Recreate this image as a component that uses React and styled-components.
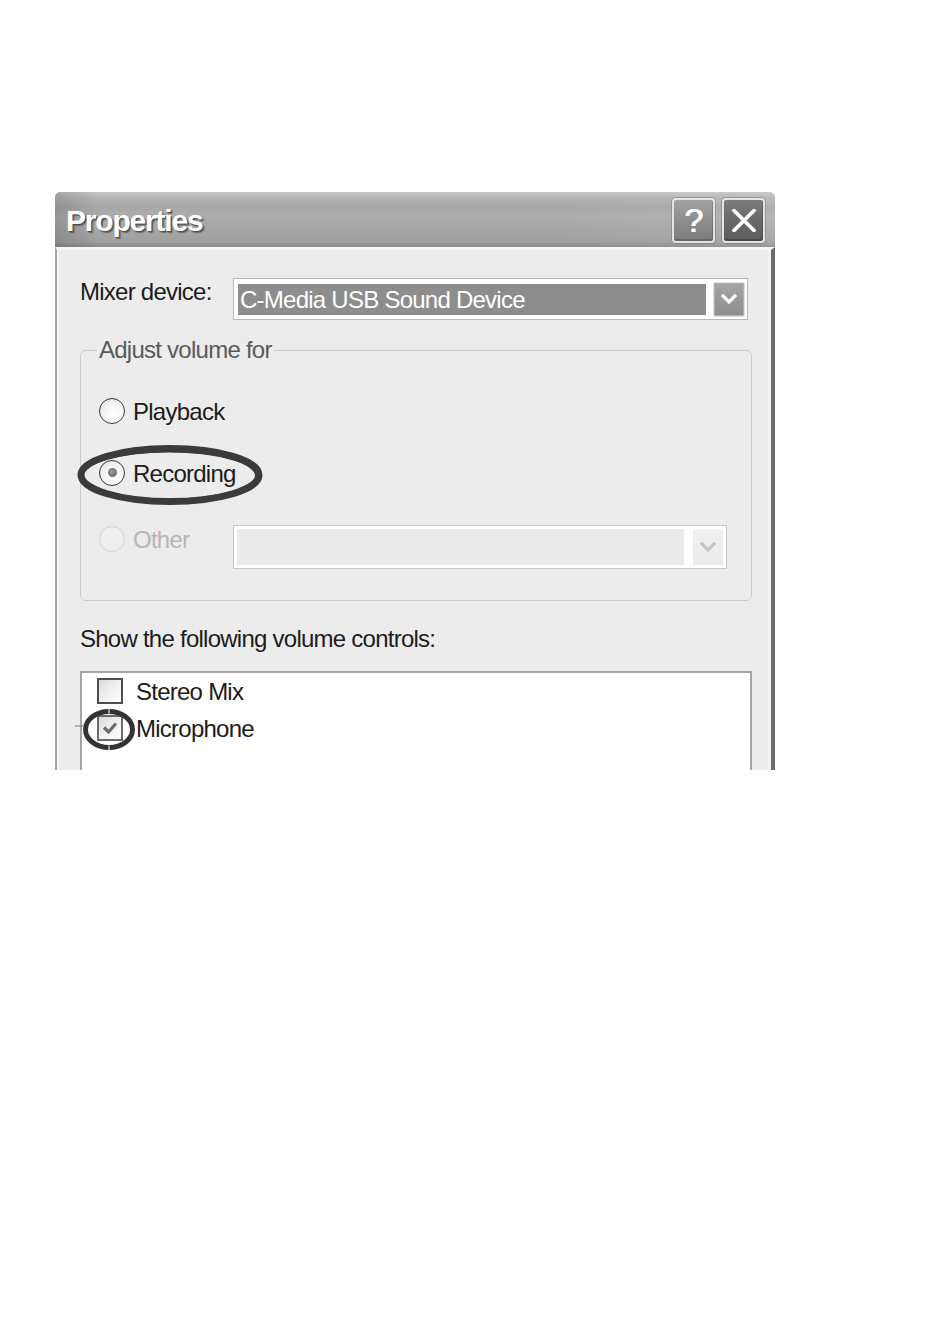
import React from 'react';
import styled, { createGlobalStyle } from 'styled-components';

const GlobalStyle = createGlobalStyle`
  html, body { margin: 0; padding: 0; background: #ffffff; }
  body { font-family: "Liberation Sans", Arial, sans-serif; }
  * { box-sizing: border-box; }
`;

const Page = styled.div`
  width: 950px;
  height: 1331px;
  padding: 192px 0 0 55px;
  background: #fff;
`;

const Dialog = styled.div`
  width: 720px;
  height: 578px;
  overflow: hidden;
  display: flex;
  flex-direction: column;
`;

const TitleBar = styled.div`
  flex: none;
  height: 55px;
  padding: 0 10px 0 11px;
  display: flex;
  align-items: center;
  justify-content: space-between;
  border-radius: 5px 5px 0 0;
  background:
    linear-gradient(to right, rgba(0,0,0,0.14), rgba(0,0,0,0) 6%, rgba(0,0,0,0) 70%, rgba(255,255,255,0.10)),
    linear-gradient(#c6c6c6 0%, #b4b4b4 10%, #a8a8a8 26%, #adadad 48%, #a5a5a5 72%, #9f9f9f 90%, #8a8a8a 100%);
`;

const Title = styled.div`
  font-family: "Liberation Sans", Arial, sans-serif;
  font-weight: 700;
  font-size: 30px;
  letter-spacing: -1.2px;
  color: #ffffff;
  text-shadow: 1px 1px 0 #505050, 2px 2px 1px rgba(0,0,0,0.35);
  margin-top: 3px;
`;

const CaptionButtons = styled.div`
  display: flex;
  gap: 7px;
  margin-top: 1px;
`;

const CaptionButton = styled.div`
  width: 43px;
  height: 45px;
  border: 2px solid #e4e4e4;
  border-radius: 4px;
  display: flex;
  align-items: center;
  justify-content: center;
  color: #fff;
  font-weight: 400;
  font-size: 34px;
  text-shadow: 1px 0 0 #fff;
  box-shadow: inset -1px -2px 0 rgba(0,0,0,0.18), 0 0 0 1px rgba(90,90,90,0.35);
  background: ${p => (p.$dark
    ? 'linear-gradient(#7c7c7c, #686868 55%, #5a5a5a)'
    : 'linear-gradient(#a2a2a2, #8c8c8c 55%, #7c7c7c)')};
`;

const Body = styled.div`
  flex: 1;
  background: #ececec;
  border-top: 3px solid #f6f6f6;
  border-left: 2px solid #a3a3a3;
  border-right: 4px solid #6b6b6b;
  box-shadow: inset 2px 0 0 #f7f7f7, inset -3px 0 0 #f2f2f2;
  padding: 28px 19px 0 23px;
  display: flex;
  flex-direction: column;
`;

const Text = styled.span`
  font-size: 24px;
  letter-spacing: -0.75px;
  line-height: 28px;
  white-space: nowrap;
  color: ${p => (p.$disabled ? '#b6b6b6' : '#1c1c1c')};
`;

const MixerRow = styled.div`
  display: flex;
  align-items: flex-start;
`;

const FieldLabel = styled(Text)`
  width: 153px;
  flex: none;
`;

const Combo = styled.div`
  width: 515px;
  height: 42px;
  border: 1px solid #b8b8b8;
  background: #fff;
  padding: 5px 2px 4px 4px;
  display: flex;
  align-items: center;
  gap: 7px;
`;

const Selection = styled.div`
  flex: 1;
  align-self: stretch;
  background: #8d8d8d;
  color: #fff;
  font-size: 24px;
  letter-spacing: -0.75px;
  line-height: 31px;
  padding-left: 2px;
  white-space: nowrap;
`;

const ArrowButton = styled.div`
  flex: none;
  width: 32px;
  height: ${p => (p.$disabled ? '38px' : '35px')};
  border: 1px solid ${p => (p.$disabled ? '#ffffff' : '#dedede')};
  border-radius: 2px;
  display: flex;
  align-items: center;
  justify-content: center;
  background: ${p => (p.$disabled
    ? 'linear-gradient(#f1f1f1, #ebebeb)'
    : 'linear-gradient(#a4a4a4, #8e8e8e)')};
  box-shadow: ${p => (p.$disabled ? 'none' : 'inset 0 0 0 1px #b2b2b2')};
`;

const Group = styled.div`
  position: relative;
  margin-top: 30px;
  height: 251px;
  border: 1px solid #cbcbcb;
  border-radius: 6px;
  padding: 30px 0 0 18px;
  display: flex;
  flex-direction: column;
`;

const Legend = styled(Text)`
  position: absolute;
  top: -15px;
  left: 16px;
  padding: 0 2px;
  background: #ececec;
  color: #5a5a5a;
`;

const RadioRow = styled.div`
  position: relative;
  height: ${p => p.$h || 62}px;
  display: flex;
  align-items: center;
`;

const RadioOption = styled.div`
  display: flex;
  align-items: center;
  gap: 8px;
  width: ${p => (p.$w ? `${p.$w}px` : 'auto')};
  flex: none;
`;

const RadioCircle = styled.div`
  width: 26px;
  height: 26px;
  border-radius: 50%;
  margin-top: -3px;
  border: 1.5px solid ${p => (p.$disabled ? '#d2d2d2' : '#3a3a3a')};
  background: ${p => (p.$disabled
    ? '#efefef'
    : 'radial-gradient(circle at 60% 65%, #ffffff 0%, #f6f6f6 45%, #dcdcdc 100%)')};
  display: flex;
  align-items: center;
  justify-content: center;
`;

const RadioDot = styled.div`
  width: 9px;
  height: 9px;
  border-radius: 50%;
  background: radial-gradient(circle at 40% 40%, #9a9a9a, #5a5a5a);
`;

const DisabledCombo = styled.div`
  width: 494px;
  height: 44px;
  margin-top: 14px;
  border: 1px solid #c6c6c6;
  background: #fff;
  padding: 3px 2px 3px 3px;
  display: flex;
  align-items: center;
  gap: 8px;
`;

const DisabledField = styled.div`
  flex: 1;
  align-self: stretch;
  background: #ebebeb;
`;

const Caption = styled(Text)`
  display: block;
  margin-top: 24px;
`;

const ListBox = styled.div`
  margin-top: 18px;
  height: 220px;
  flex: none;
  background: #ffffff;
  border: 2px solid #a4a4a4;
  padding: 0 0 0 15px;
  display: flex;
  flex-direction: column;
`;

const CheckRow = styled.div`
  position: relative;
  height: 37px;
  display: flex;
  align-items: center;
  gap: 13px;
`;

const CheckBox = styled.div`
  width: 26px;
  height: 26px;
  flex: none;
  margin-top: -2px;
  border: 2px solid ${p => (p.$checked ? '#6a6a6a' : '#4e4e4e')};
  background: linear-gradient(135deg, #d8d8d8 0%, #eeeeee 45%, #ffffff 100%);
  display: flex;
  align-items: center;
  justify-content: center;
`;

const Marker = styled.svg`
  position: absolute;
  left: ${p => p.$x}px;
  top: ${p => p.$y}px;
  overflow: visible;
  pointer-events: none;
`;

const Chevron = ({ color }) => (
  <svg width="16" height="11" viewBox="0 0 16 11">
    <path d="M2 2 L8 8 L14 2" fill="none" stroke={color} strokeWidth="3.2" strokeLinecap="square" />
  </svg>
);

const CloseGlyph = () => (
  <svg width="24" height="23" viewBox="0 0 24 23">
    <path d="M2 1.5 L22 21.5 M22 1.5 L2 21.5" stroke="#fff" strokeWidth="3.6" strokeLinecap="square" />
  </svg>
);

const CheckGlyph = () => (
  <svg width="18" height="16" viewBox="0 0 18 16">
    <path d="M3 7.5 L7.5 12 L15 3.5" fill="none" stroke="#6a6a6a" strokeWidth="3.2" />
  </svg>
);

export default function App() {
  return (
    <>
      <GlobalStyle />
      <Page>
        <Dialog>
          <TitleBar>
            <Title>Properties</Title>
            <CaptionButtons>
              <CaptionButton>?</CaptionButton>
              <CaptionButton $dark>
                <CloseGlyph />
              </CaptionButton>
            </CaptionButtons>
          </TitleBar>
          <Body>
            <MixerRow>
              <FieldLabel>Mixer device:</FieldLabel>
              <Combo>
                <Selection>C-Media USB Sound Device</Selection>
                <ArrowButton>
                  <Chevron color="#ffffff" />
                </ArrowButton>
              </Combo>
            </MixerRow>

            <Group>
              <Legend>Adjust volume for</Legend>
              <RadioRow>
                <RadioOption>
                  <RadioCircle />
                  <Text>Playback</Text>
                </RadioOption>
              </RadioRow>
              <RadioRow>
                <RadioOption>
                  <RadioCircle>
                    <RadioDot />
                  </RadioCircle>
                  <Text>Recording</Text>
                </RadioOption>
                <Marker $x={-22} $y={2} width="186" height="60" viewBox="0 0 186 60">
                  <ellipse cx="93" cy="30" rx="89" ry="26.5" fill="none" stroke="#3b3b3b" strokeWidth="7" />
                  <ellipse cx="92" cy="30.5" rx="88" ry="25" fill="none" stroke="#3b3b3b" strokeWidth="4" />
                </Marker>
              </RadioRow>
              <RadioRow $h={70}>
                <RadioOption $w={134}>
                  <RadioCircle $disabled />
                  <Text $disabled>Other</Text>
                </RadioOption>
                <DisabledCombo>
                  <DisabledField />
                  <ArrowButton $disabled>
                    <Chevron color="#c4c4c4" />
                  </ArrowButton>
                </DisabledCombo>
              </RadioRow>
            </Group>

            <Caption>Show the following volume controls:</Caption>

            <ListBox>
              <CheckRow>
                <CheckBox />
                <Text>Stereo Mix</Text>
              </CheckRow>
              <CheckRow>
                <CheckBox $checked>
                  <CheckGlyph />
                </CheckBox>
                <Text>Microphone</Text>
                <Marker $x={-14} $y={-1} width="52" height="41" viewBox="0 0 52 41">
                  <ellipse cx="26" cy="20.5" rx="23.5" ry="18" fill="none" stroke="#333333" strokeWidth="5" />
                  <path d="M26 0 V4.5 M26 36.5 V41" stroke="#e4e4e4" strokeWidth="1.2" />
                  <path d="M-8 17 H1" stroke="#777" strokeWidth="1" />
                </Marker>
              </CheckRow>
            </ListBox>
          </Body>
        </Dialog>
      </Page>
    </>
  );
}
